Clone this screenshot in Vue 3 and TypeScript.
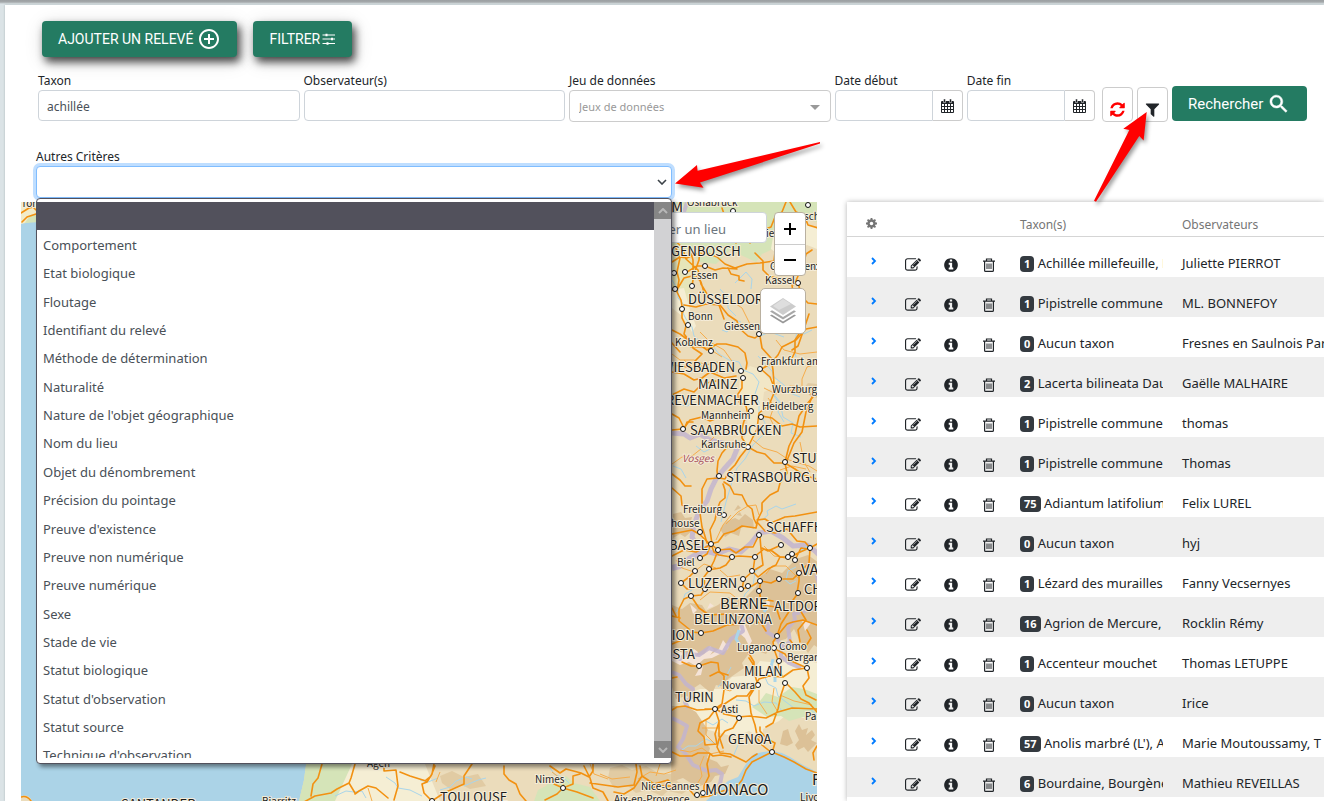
<script setup lang="ts">
import { ref } from 'vue'

interface Row {
  count: number
  taxon: string
  observer: string
}
type Label = [string, number, number, string]

const taxon = ref('achillée')
const observer = ref('')
const dateMin = ref('')
const dateMax = ref('')
const place = ref('')

const criteria: string[] = [
  '',
  'Comportement',
  'Etat biologique',
  'Floutage',
  'Identifiant du relevé',
  'Méthode de détermination',
  'Naturalité',
  "Nature de l'objet géographique",
  'Nom du lieu',
  'Objet du dénombrement',
  'Précision du pointage',
  "Preuve d'existence",
  'Preuve non numérique',
  'Preuve numérique',
  'Sexe',
  'Stade de vie',
  'Statut biologique',
  "Statut d'observation",
  'Statut source',
  "Technique d'observation",
]

const rows: Row[] = [
  { count: 1, taxon: 'Achillée millefeuille, Herbe', observer: 'Juliette PIERROT' },
  { count: 1, taxon: 'Pipistrelle commune', observer: 'ML. BONNEFOY' },
  { count: 0, taxon: 'Aucun taxon', observer: 'Fresnes en Saulnois Parc' },
  { count: 2, taxon: 'Lacerta bilineata Daudin', observer: 'Gaëlle MALHAIRE' },
  { count: 1, taxon: 'Pipistrelle commune', observer: 'thomas' },
  { count: 1, taxon: 'Pipistrelle commune', observer: 'Thomas' },
  { count: 75, taxon: 'Adiantum latifolium', observer: 'Felix LUREL' },
  { count: 0, taxon: 'Aucun taxon', observer: 'hyj' },
  { count: 1, taxon: 'Lézard des murailles', observer: 'Fanny Vecsernyes' },
  { count: 16, taxon: 'Agrion de Mercure,', observer: 'Rocklin Rémy' },
  { count: 1, taxon: 'Accenteur mouchet', observer: 'Thomas LETUPPE' },
  { count: 0, taxon: 'Aucun taxon', observer: 'Irice' },
  { count: 57, taxon: "Anolis marbré (L'), Anolis", observer: 'Marie Moutoussamy, T' },
  { count: 6, taxon: 'Bourdaine, Bourgène', observer: 'Mathieu REVEILLAS' },
]

const cities: [number, number][] = [
  [808, 205], [733, 211], [705, 266], [685, 272], [674, 273], [675, 289], [692, 286], [682, 309],
  [688, 325], [759, 334], [798, 283], [711, 351], [741, 371], [743, 378], [760, 369], [816, 267],
  [751, 411], [761, 417], [683, 429], [748, 447], [785, 462], [719, 476], [724, 515], [700, 532],
  [711, 544], [718, 550], [700, 558], [732, 557], [755, 557], [759, 535], [781, 545], [810, 548],
  [792, 554], [788, 557], [795, 560], [799, 573], [695, 571], [709, 569], [752, 571], [779, 579],
  [743, 579], [760, 581], [748, 586], [681, 583], [741, 589], [705, 589], [691, 596], [798, 593],
  [759, 591], [701, 633], [777, 636], [774, 648], [779, 661], [807, 668], [699, 666], [758, 685],
  [785, 683], [715, 709], [739, 718], [772, 752], [697, 795], [703, 793], [563, 788], [432, 801],
]

const labels: Label[] = [
  ['Torquay', 21, 207, 's'],
  ['M', 671, 212, 'b'],
  ['Osnabruck', 687, 206, 's'],
  ['sch', 804, 220, 's'],
  ['iel', 766, 237, 's'],
  ['GENBOSCH', 671, 256, 'm'],
  ['Göttingen', 770, 270, 's'],
  ['Essen', 691, 279, 's'],
  ['Kassel', 765, 284, 's'],
  ['DÜSSELDORF', 688, 304, 'm'],
  ['Bonn', 688, 320, 's'],
  ['Giessen', 724, 330, 's'],
  ['Koblenz', 675, 346, 's'],
  ['WIESBADEN', 662, 372, 'm'],
  ['Frankfurt am', 761, 365, 's'],
  ['MAINZ', 698, 389, 'm'],
  ['Wurzburg', 772, 393, 's'],
  ['GREVENMACHER', 657, 405, 'm'],
  ['Heidelberg', 762, 410, 's'],
  ['Mannheim', 701, 419, 's'],
  ['SAARBRUCKEN', 690, 435, 'm'],
  ['Karlsruhe', 701, 448, 's'],
  ['Vosges', 682, 462, 'v'],
  ['STUTTGART', 792, 463, 'm'],
  ['STRASBOURG', 726, 482, 'm'],
  ['Ulm', 812, 482, 's'],
  ['Freiburg', 683, 513, 's'],
  ['Mulhouse', 654, 527, 's'],
  ['SCHAFFHAUSEN', 766, 532, 'm'],
  ['BASEL', 669, 550, 'm'],
  ['Biel', 677, 566, 's'],
  ['VADUZ', 801, 575, 'b'],
  ['LUZERN', 688, 588, 'm'],
  ['CHUR', 804, 594, 'm'],
  ['BERNE', 720, 609, 'b'],
  ['ALTDORF', 774, 611, 'm'],
  ['BELLINZONA', 694, 624, 'm'],
  ['SION', 664, 640, 'm'],
  ['Lugano', 737, 651, 's'],
  ['Como', 779, 650, 's'],
  ['AOSTA', 655, 659, 'm'],
  ['Bergamo', 787, 661, 's'],
  ['MILAN', 744, 676, 'm'],
  ['Novara', 722, 689, 's'],
  ['TURIN', 675, 702, 'm'],
  ['Asti', 721, 713, 's'],
  ['Parma', 805, 720, 's'],
  ['GENOA', 728, 744, 'm'],
  ['Firenze', 812, 785, 'b'],
  ['Nice-Cannes', 641, 790, 's'],
  ['MONACO', 705, 795, 'b'],
  ['Livorno', 800, 801, 's'],
  ['Nimes', 535, 783, 's'],
  ['Aix-en-Provence', 614, 803, 's'],
  ['TOULOUSE', 440, 802, 'm'],
  ['Agen', 367, 767, 's'],
  ['Biarritz', 262, 805, 's'],
  ['SANTANDER', 121, 809, 'm'],
]

const shapes: Record<string, string> = {
  edit: 'M888 1184l116-116-152-152-116 116v56h96v96h56zm440-720q-16-16-33 1l-350 350q-17 17-1 33t33-1l350-350q17-17 1-33zm80 594v190q0 119-84.5 203.5t-203.5 84.5h-832q-119 0-203.5-84.5t-84.5-203.5v-832q0-119 84.5-203.5t203.5-84.5h832q63 0 117 25 15 7 18 23 3 17-9 29l-49 49q-14 14-32 8-23-6-45-6h-832q-66 0-113 47t-47 113v832q0 66 47 113t113 47h832q66 0 113-47t47-113v-126q0-13 9-22l64-64q15-15 35-7t20 29zm-96-738l288 288-672 672h-288v-288zm444 132l-92 92-288-288 92-92q28-28 68-28t68 28l152 152q28 28 28 68t-28 68z',
  info: 'M1152 1376v-160q0-14-9-23t-23-9h-96v-512q0-14-9-23t-23-9h-320q-14 0-23 9t-9 23v160q0 14 9 23t23 9h96v320h-96q-14 0-23 9t-9 23v160q0 14 9 23t23 9h448q14 0 23-9t9-23zm-128-896v-160q0-14-9-23t-23-9h-192q-14 0-23 9t-9 23v160q0 14 9 23t23 9h192q14 0 23-9t9-23zm640 416q0 209-103 385.5t-279.5 279.5-385.5 103-385.5-103-279.5-279.5-103-385.5 103-385.5 279.5-279.5 385.5-103 385.5 103 279.5 279.5 103 385.5z',
  refresh: 'M1639 1056q0 5-1 7-64 268-268 434.5t-478 166.5q-146 0-282.5-55t-243.5-157l-129 129q-19 19-45 19t-45-19-19-45v-448q0-26 19-45t45-19h448q26 0 45 19t19 45-19 45l-137 137q71 66 161 102t187 36q134 0 250-65t186-179q11-17 53-117 8-23 30-23h192q13 0 22.5 9.5t9.5 22.5zm25-800v448q0 26-19 45t-45 19h-448q-26 0-45-19t-19-45 19-45l138-138q-148-137-349-137-134 0-250 65t-186 179q-11 17-53 117-8 23-30 23h-199q-13 0-22.5-9.5t-9.5-22.5v-7q65-268 270-434.5t480-166.5q146 0 284 55.5t245 156.5l130-129q19-19 45-19t45 19 19 45z',
  filter: 'M1595 295q17 41-14 70l-493 493v742q0 42-39 59-13 5-25 5-27 0-45-19l-256-256q-19-19-19-45v-486l-493-493q-31-29-14-70 17-39 59-39h1280q42 0 59 39z',
}
</script>

<template>
  <div class="page">
    <main class="sheet">
      <div class="toolbar">
        <button type="button" class="btn raised">
          AJOUTER UN RELEVÉ
          <svg class="plus" viewBox="0 0 24 24" aria-hidden="true"><path fill="currentColor" d="M13 7h-2v4H7v2h4v4h2v-4h4v-2h-4V7zm-1-5C6.480 2 2 6.480 2 12s4.480 10 10 10 10-4.480 10-10S17.520 2 12 2zm0 18c-4.410 0-8-3.590-8-8s3.590-8 8-8 8 3.590 8 8-3.590 8-8 8z" /></svg>
        </button>
        <button type="button" class="btn raised">
          FILTRER
          <svg class="tune" viewBox="0 0 14 12" aria-hidden="true" stroke="currentColor" stroke-width="1.200"><path d="M0.500 2H13M0.500 6H13M0.500 10.500H13" /><path stroke-width="2.600" d="M3.500 2h2M9 6h2M4.500 10.500h2" /></svg>
        </button>
      </div>

      <form class="filters" @submit.prevent>
        <div class="field wide">
          <label for="taxon">Taxon</label>
          <input id="taxon" v-model="taxon" type="text" class="box" />
        </div>
        <div class="field wide">
          <label for="observer">Observateur(s)</label>
          <input id="observer" v-model="observer" type="text" class="box" />
        </div>
        <div class="field wide">
          <label for="dataset">Jeu de données</label>
          <div class="select-wrap">
            <select id="dataset" class="box dataset"><option>Jeux de données</option></select>
            <svg class="caret" viewBox="0 0 10 5" aria-hidden="true"><path d="M0 0h10L5 5z" fill="#999" /></svg>
          </div>
        </div>
        <div class="field narrow">
          <label for="dmin">Date début</label>
          <div class="date">
            <input id="dmin" v-model="dateMin" type="text" class="box" />
            <button type="button" aria-label="Choisir la date de début">
              <svg viewBox="0 0 13 14" aria-hidden="true"><path fill="#212529" d="M1 2h11a1 1 0 0 1 1 1v10a1 1 0 0 1-1 1H1a1 1 0 0 1-1-1V3a1 1 0 0 1 1-1z" /><path fill="#212529" stroke="#fff" stroke-width=".5" d="M2.500 0h2v3.500h-2zM8.500 0h2v3.500h-2z" /><path fill="#fff" d="M1 5h2v2H1zM4 5h2v2H4zM7 5h2v2H7zM10 5h2v2h-2zM1 8h2v2H1zM4 8h2v2H4zM7 8h2v2H7zM10 8h2v2h-2zM1 11h2v2H1zM4 11h2v2H4zM7 11h2v2H7zM10 11h2v2h-2z" /></svg>
            </button>
          </div>
        </div>
        <div class="field narrow">
          <label for="dmax">Date fin</label>
          <div class="date">
            <input id="dmax" v-model="dateMax" type="text" class="box" />
            <button type="button" aria-label="Choisir la date de fin">
              <svg viewBox="0 0 13 14" aria-hidden="true"><path fill="#212529" d="M1 2h11a1 1 0 0 1 1 1v10a1 1 0 0 1-1 1H1a1 1 0 0 1-1-1V3a1 1 0 0 1 1-1z" /><path fill="#212529" stroke="#fff" stroke-width=".5" d="M2.500 0h2v3.500h-2zM8.500 0h2v3.500h-2z" /><path fill="#fff" d="M1 5h2v2H1zM4 5h2v2H4zM7 5h2v2H7zM10 5h2v2h-2zM1 8h2v2H1zM4 8h2v2H4zM7 8h2v2H7zM10 8h2v2h-2zM1 11h2v2H1zM4 11h2v2H4zM7 11h2v2H7zM10 11h2v2h-2z" /></svg>
            </button>
          </div>
        </div>
        <div class="actions">
          <button type="button" class="square red" aria-label="Réinitialiser"><svg viewBox="0 0 1792 1792" aria-hidden="true"><path :d="shapes.refresh" fill="currentColor" /></svg></button>
          <button type="button" class="square" aria-label="Autres filtres"><svg viewBox="0 0 1792 1792" aria-hidden="true"><path :d="shapes.filter" fill="currentColor" /></svg></button>
          <button type="submit" class="btn search">
            Rechercher
            <svg viewBox="0 0 24 24" aria-hidden="true"><path fill="currentColor" stroke="currentColor" stroke-width=".5" d="M15.500 14h-.79l-.28-.27C15.410 12.590 16 11.110 16 9.500 16 5.910 13.090 3 9.500 3S3 5.910 3 9.500 5.910 16 9.500 16c1.610 0 3.090-.59 4.230-1.570l.27.28v.79l5 4.990L20.490 19l-4.990-5zm-6 0C7.010 14 5 11.990 5 9.500S7.010 5 9.500 5 14 7.010 14 9.500 11.990 14 9.500 14z" /></svg>
          </button>
        </div>
      </form>

      <div class="criteria">
        <label for="criteria">Autres Critères</label>
        <div class="combo">
          <select id="criteria" class="box focus"><option></option></select>
          <svg class="chevron" viewBox="0 0 10 6" aria-hidden="true"><path d="M1 1l4 4 4-4" fill="none" stroke="#3c4248" stroke-width="1.600" /></svg>
          <div class="popup">
            <div class="clip">
              <ul role="listbox" aria-label="Autres Critères">
                <li v-for="(c, i) in criteria" :key="c" role="option" :aria-selected="i === 0" :class="{ active: i === 0 }">{{ c }}</li>
              </ul>
            </div>
            <div class="scroll" aria-hidden="true">
              <span class="end"><svg viewBox="0 0 10 6"><path d="M1 5l4-4 4 4" /></svg></span>
              <span class="thumb"></span>
              <span class="end"><svg viewBox="0 0 10 6"><path d="M1 1l4 4 4-4" /></svg></span>
            </div>
          </div>
        </div>
      </div>

      <div class="content">
        <section class="map" aria-label="Carte">
          <svg class="tiles" viewBox="21 202 796 599" preserveAspectRatio="xMaxYMin slice">
            <rect x="21" y="202" width="796" height="599" fill="#abd3e7" />
            <path d="M21 202H40V221L30 222L21 224z" fill="#f2ecc9" />
            <path d="M25 223q4-9 15-9v8z" fill="#d5e4b8" />
            <path d="M308 750L304 780L299 801H706L718 790L728 781L738 777L746 764L754 754L763 752L772 751L782 753L790 757L803 765L817 772V202H308z" fill="#ebdcbb" />
            <path d="M308 750L304 780L299 801H340L352 764z" fill="#d5e4b8" />
            <path d="M352 764L335 801H440L425 764z" fill="#f5eed4" />
            <path d="M552 778l-6 8-8 4-4 11h66l-10-14-16-4-8-7-8 4z" fill="#d5e4b8" />
            <path d="M21 801v-5q8-2 11 5z" fill="#ebdcbb" />
            <path d="M660 202H817V222L790 216L775 232L782 245L762 254L756 262L730 250L716 264L700 262L690 252L660 256z" fill="#d5e4b8" />
            <path d="M775 225l20-8 22 12v20l-10-4-12 6-14 6-10-8z" fill="#f5eed4" />
            <path d="M665 256l22-1 12 15-4 10-6 8 4 10-8 12-22-8z" fill="#e6e5b9" />
            <path d="M672 290l12-2 6 22 6 16-4 6-10-16-10-8z" fill="#f5eed4" />
            <path d="M740 374l10-8 12 4 6 8 10 2-6 8-8 4-2 16-6 22-8 18-8 4 8-24-2-18-8-8z" fill="#f2e7c6" />
            <path d="M686 694l14-5 20 0 12-12 18-2 10-14 20 2 20-4 17 4v58l-18-4-8-6-12 10-16 8 0 10-14-8-14 6-30-8-16-22z" fill="#f5eed4" />
            <path d="M752 707l8-6 6-8 12 4 14-10 12 2 13 5v27l-14-4-14 4-8-5-14 1z" fill="#d5e4b8" />
            <g fill="#dcc197">
              <path d="M672 605l10 4 8-6 12 2 4 6 12-6 10-8 14 4 14-14 4-10 10-8 12 4 14-14 12-4 14 10V650l-8-5-6 8-8-12-6-12-8 10-12 3-8 12-14-5-10 14 2 5-16 11-4 8-8-2-4 9-12-10-6 4 2 12-10-4-10 3-4-12z" />
              <path d="M672 706l14 0 10 6 12 18-5 10 7 8-3 10 10 4 4 5 8-2-4 9-10 2-4 6-14 5-14-9-12 4z" />
              <path d="M673 514l8-2 4 6 7-1-2 8 3 5-8 7-5-3-7 4zM720 529l7-8 8-3 4 2 6-6 8 6 1 9-7-3-6 2-2 8-8-3-6 4zM734 511l4-6 3 3zM736 515l4-3 2 4z" />
              <path d="M780 744l3-13 5-2 2 7 3 7-6 3zM795 731l4-7 3 6 6-2-2 7 6-5 3 5-4 5 6 3-5 5-4 4-4-5-6 3-3-5 4-5z" />
              <path d="M610 768l12-3 10 5 14-4 14 8 12 0 6 8 14 5-10 7-14-3-6 5-14-6-12 3-8-7-14 2-6-10zM804 388l4-5 9 1v14l-7-2zM440 776l12-5 12 6 14-3 8 12-16 3-8-4-12 4-8-6z" opacity=".65" />
            </g>
            <g fill="#f4e3d8">
              <path d="M672 653l9-1 5 3 8-6 4 3-2 4 8-2 6-8 4 4-4 5 9-6 4-9 3 4 4-2-2 7-8 5-8 4-8 1-8 7-7-4-9 3-8-4zM740 624l5 1 3 7 4 9-3 5-4-8-6-5zM746 616l5 6-1 6z" />
              <path d="M695 676l4-7 4-3-2 9zM764 597l6 5-1 6zM802 620l9 3-6 8zM690 604l7 6-4 4zM710 603l4 3-7 3z" />
            </g>
            <g fill="none" stroke="#c3b5cf" stroke-width="4" stroke-linejoin="round" opacity=".85">
              <path d="M672 433l12 1 6 4 10-4 10 6 12 3 10 2 5 4-4 10-9 10-8 10-5 10-4 12-8 10-5 14-2 12 5 9 8 5 12 3 12-5 12 3 10-9 8-10 12-2 12 7 10 8 14-1 8 6 8 8-6 16 2 8" stroke-width="5" />
              <path d="M672 568l8-2 9-7 10-6 10-6" stroke-width="6" />
              <path d="M672 655l8 4 7-5 12 1 10-7 14 5 8-14 12-8-2-8 10-8 10 3 8 6-2 8 10 6 4 8 0 10 8 7 12 5M780 648l10-6-2-14 7-8-1-6 14-4 9-2" />
              <path d="M672 672l7 3 7 9 7 5-1 8-7 5 3 6M672 718l8 4 7 4-4 13-5 8 7 6 8 12 14 6 9-1 6 4-2 10-6 7" />
              <path d="M687 202l-3 10-8 8" />
            </g>
            <g fill="none" stroke="#a9d5ea" stroke-width="1" stroke-linejoin="round">
              <path d="M672 280l6 10 0 8 6 7-2 6 4 8 6 8 2 9 7 6 12 4 6 8 10 6 10 2 4 8 10 4 6 8-4 12 4 8 0 10 6 11 -2 12-10 10-8 14-8 9-5 14-6 20-5 20" />
              <path d="M722 330l5 2 8-12 6 2M735 283l6-6 5-5 6 7-1 10M760 336l10-4 14 5M736 316l-8-8 0-10-8-9M758 356l14 15 2 6 10 8 6 8 10 4M772 392l8 10 3 15 10 6-2 10 10 4" />
              <path d="M812 330l-8 4-7-3-3 16 2 10M774 386l0 10 6 8-2 8 6 10M674 404l14 2 5-6M673 466l8 3 5 9M762 520l6-5-1-4 9-5 6 3 14-5M786 580l2-9 8-4M742 602l3-8 8-8 2-14 6-5M676 612l6-8 3-10 7-4M783 578l7 6 6-3M696 446l8 6 6-3" />
              <path d="M764 675l4 9 8 4 2 8 16 12 16 1 7 6M736 700l10 1 8 5 10-4 12 1 6 8M682 750l6-4 8 0 10-7 8 4 8 0M704 720l9 5 9-6 6 4M733 757l5-12 1-12M731 667l-6 12-7 8" />
              <path d="M420 780l8 2 10-4M335 796l11-5 8 1 8-1 4 7M440 790l10-3 6-6 10-4 6 2M550 768l5 7 8 2 6 6M464 786l14-6 8-2M386 777l9 6 3 5 12 2 12 6" />
              <path d="M773 659l-2 8 4 7 0 8M740 645l-4-6 3-9M800 550l12-4M764 612l4-6" stroke-width="3" />
            </g>
            <g fill="none" stroke="#f6ad4c" stroke-width="1" stroke-linejoin="round">
              <path d="M672 354l8 6 14 0 12 5 12-3M690 347l18 1 14 9M672 464l10-7 10-1 14-11 8-8M753 440l10 8 14 4 12 8 20 6 8 5M780 470l12-4 14 3M726 524l12-12 10-6 8-1 3 10M716 540l7-15 8-10" />
              <path d="M700 332l10 10 14 8 10 14M684 360l10 9 10-4 14 8M730 300l12 8 10 20M776 340l8 10 16 4 17-2M764 388l12 6 14-8 12 1 0-8 5-12 10-3M776 430l-6-12 4-12-6-8M800 442l4 20 6 10" />
              <path d="M676 560l6 8 12 4 10-8 12 4M720 570l8 7 12-2M764 546l10 10 14 2M766 574l6-8 14 0 12 12M700 600l10-8 20 1 10 8M752 690l-12-6-10 7-9-3M759 690l0 12 8 12M774 688l-2 14 6 10M780 695l14 6 18 4M706 720l0 15 10 10M702 728l18 0M680 750l10 2 12-4 8 6 14-3" />
              <path d="M676 770l-12 4-14-2-12 7M660 764l-4 12M704 756l-4 10 2 10-6 10M600 774l12 5 18-2M440 772l-4 10M368 788l4 13M552 772l8 6 4 8M590 764l4 10 14 5" />
            </g>
            <g fill="none" stroke="#f29111" stroke-width="1.600" stroke-linejoin="round" stroke-linecap="round">
              <path d="M672 262l8-5 7 1 8-4 12-1 10 4 8 7 10 4 12-4 13-1 14-2 1-9M672 238l10 9 4 12 12 11 3 14 6 10M676 248l4 10-3 14 2 8-2 12 4 8 2 12M687 272l10-6 8 0 10 4 8-2 14 1M728 268l3 6 8 2 0 4 5 1M660 298l8-6 10-4 6-10 8-2M700 246l-1 14-5 14-2 12M689 246l4 14 0 12 8 10 4 14 14 9 5 14" />
              <path d="M736 243l-2-8-7-7-7-8 4-6-2-6M750 243l3-8 6 3 4-8 8-3 4-10 7-5 4-10M790 202l6 10 8 3 4 10 10 3M672 220l8 2 6 10 12 0M812 250l-6 4-2 8-6 6 0 8-3 7M755 253l8 8 0 9 6 6 10 3 19 5M798 283l-6 2 1 8-8 6 0 8-8 7M798 283l4 14 6 6 9 1" />
              <path d="M684 305l12 2 10-3 14 1 8 10 9 6 2 7 9 8 7 2 5-4M672 330l8 4 8 6 11 4 8 6 10-6 9 0 12 3 7 6 2 10-1 6M760 370l10-6 8-9 4-8 14-7 10-11 11-2M682 310l0 8 4 8-2 8 5 6 4 8 9 6-7 7-7 6-16-2M672 372l12 2 10 6 8-2 8-6 14 6 12-2M672 395l12-6 10 3 8-8 14-3M742 380l0 8-4 6 1 8 7 4 2 9-4 6-2 8" />
              <path d="M760 336l2 12 9 10 2 12 1 14 0 9-5 12-10 8-2 16-9 18M792 350l6-4 7-20 4-12M790 362l5-10 0-12 4-6M762 370l8 7 4 10 8 4 18-1 17 6M762 416l10 2 10 8 10-2 8 3 17-1M817 392l-10 12-8 12-4 18-6 12-4 16M680 352l-9-10M672 414l7 4 5 10 6-8 12-3 8 4 10-4 10 2 6-3 7 0" />
              <path d="M672 430l10-1M684 430l3-8 6 0M742 430l0 8 6 9-8 10-5 8-6 6-4 8-6-1M748 447l9 5 8 2 9 9 11 0 10 6 8 6 14 4M738 442l-8 2-8 9-4 8-1 10 1 7-11 1-5 10 0 14-2 10 2 14 2 6 3 10 5 1M672 474l8 6 5 6 6 0M723 484l2 6 0 8-5 4-3 8-2 10-5 10 2 14" />
              <path d="M724 482l6 4 4 8 8 1 5 10 5 4 2 10 3 6M785 463l2 10-7 10-2 8-8 4-8 8 0 8-4 8-2 9-14-2-8 5-10 3-6 8-8 2M786 463l8-20 8-11 4-20 4-10 4-10M757 520l8-1 6 4 14-6 10-1 22-4M757 522l8 9 10 2 12-4 10 12 8 1 5 6 7-4M672 488l9 8 1 9 7 3M672 534l10-2 10-2 7 4 11 10M672 556l12-6 12 2 14-7" />
              <path d="M711 544l7 6 12-1 6 4 9-6 8 0 6-12M700 558l7-4 4-10 3 8 5 3 12 2 8-1 15 1 10-8 8 2 8 6 9 1 9-5 9-4M718 550l-4 11-4 8-6 8 1 10M732 557l-6 8-6 3 -12 2M755 557l-2 14-9 8-2 10M760 537l1 12 2 16-10 6M762 548l6 3 13-6M795 560l6-12 9 1-1 14-4 4-6 6 0 8-2 12M752 571l6 6 10-8 8-4 4-8 8 0M779 579l-8 4-10-2-2 10 2 8 12 2" />
              <path d="M799 573l-6 6-10 0M681 583l6 6 10-2 8 2-4 6-10 1-7 3-5 10 0 12 10 8M672 616l8 2M695 571l-6 6 -8 6M691 596l8 12 10 7 18-1M760 581l-8 5-10 3M759 591l3 14 14 2 4 12M798 593l-7 10-1 7-9 14-4 12M672 608l4 8M672 644l10-4 10-8 9 1 12-2 14-6 16-1 10-3 8 2 5 8" />
              <path d="M777 636l-4 6 1 7 4 11 1 8 3 8M807 668l-14 2-10 7-14-1-10 3-5 8-7 9-10 0-8 5-12 8-12 0M699 666l-8 0-9-4M699 666l12-4 7 1 1 8 5 5 0 14-2 14-7 5M672 678l5-1M758 685l-4 4-5 8 2 16 4 12 2 10 5 3M785 683l-4 12-3 14-5 14-7 4M787 684l8 8 6 7 8 4 8 9M716 709l8 5 14 3 12-1 16 2 12-6 14-4 25 1M672 710l5-3 8-1 12 4 18-1" />
              <path d="M748 652l6 10 0 10 3 10M749 658l4 6-2 8M710 676l8-4 10 3M777 650l8 4 4 6 18 8M807 668l2 10-6 8 3 9 10 5M790 640l6 8 10-2 5-8-4-8M800 610l6 10-8 10 2 12M777 636l10-12 6-2 10-2 14 5M715 710l-6 8-9 5-2 8 6 6 1 8 12-1-2-10 4-12M716 712l3 9 0 15 4 12" />
              <path d="M739 718l-6 10-8 3-6 8-2 8 3 6 10 1 16 8 6-5 5-3M760 727l0 4 7 8 8 4-3 10-10-8-4-6M772 752l-10 5-10 5-6 8-4 10-8 10-8 0-10 3-7 3-8 1M772 752l12 5 10 5 12 7 11 4M817 746l-4 7 1 7M672 752l8 4 12 0 6-3 11 0 4 3 8-1 10 2" />
              <path d="M710 754l-3 10 2 12-5 10 0 8M322 764l-4 14-5 6-2 12M355 764l-4 14-2 5-12 6-6 4-16 3-11 6M349 783l6 10M355 794l4-3 9-5 8 2 12 10M384 764l0 7 12-1 2 16-4 14M400 772l10 4 16 5M434 764l-2 10-5 8-5 2 2 9 8 8M426 780l5-4 4-10M432 801l12-8 20-9 0-8 8-12M504 766l0 8 5 6 7 4 4 10 6 7" />
              <path d="M550 766l10 7 6-4 15 4 8 4 4-6 0-8M554 784l9 4 10-4 0-8 7-2M584 766l6 12 3 10 10 4 5 9M563 788l-6 6-12 6M563 788l14 4 16 6M590 783l28 4 16-2 3-13-1-8M640 766l2 10-8 12-10 6-10-2M642 776l12 8 14-4 6 6 14 2 6 7 3 0M650 790l6-4 16 0M21 797q6-2 10 4M21 213l8-5 5-1M22 222l5-5 9-3M30 204l6 6" />
            </g>
            <g fill="#fff" stroke="#111" stroke-width="1">
              <circle v-for="(c, i) in cities" :key="i" :cx="c[0]" :cy="c[1]" r="2.500" />
            </g>
            <text v-for="l in labels" :key="l[0]" :x="l[1]" :y="l[2]" :class="['city', l[3]]">{{ l[0] }}</text>
          </svg>
          <div class="map-tools">
            <input v-model="place" class="place" type="search" placeholder="Rechercher un lieu" aria-label="Rechercher un lieu" />
            <div class="map-side">
              <div class="zoom">
                <button type="button" aria-label="Zoom avant"><svg viewBox="0 0 12 12"><path d="M6 0v12M0 6h12" /></svg></button>
                <button type="button" aria-label="Zoom arrière"><svg viewBox="0 0 12 12"><path d="M0 6h12" /></svg></button>
              </div>
              <button type="button" class="layers" aria-label="Couches">
                <svg viewBox="0 0 26 26"><path fill="#989898" d="M0 17.500l13-8 13 8-13 8z" /><path fill="#fff" d="M0 15.500l13-8 13 8-13 8z" /><path fill="#a8a8a8" d="M0 13.500l13-8 13 8-13 8z" /><path fill="#fff" d="M0 11l13-8 13 8-13 8z" /><path fill="#ccc" d="M0 8.500L13 0l13 8.500L13 17z" /><path fill="#dedede" d="M3 8l10-7 8 5-12 6z" /></svg>
              </button>
            </div>
          </div>
        </section>

        <section class="results">
          <table>
            <colgroup>
              <col class="c-open" /><col class="c-icon" /><col class="c-icon" /><col class="c-icon" /><col class="c-taxon" /><col />
            </colgroup>
            <thead>
              <tr>
                <th class="mid"><button type="button" aria-label="Colonnes"><svg class="gear" viewBox="0 0 12 12"><g fill="#757575"><path d="M5 0h2v12H5zM0 5h12v2H0zM1 2.400L2.400 1 11 9.600 9.600 11zM9.600 1L11 2.400 2.400 11 1 9.600z" /><circle cx="6" cy="6" r="4.600" /></g><circle cx="6" cy="6" r="1.900" fill="#fff" /></svg></button></th>
                <th></th><th></th><th></th>
                <th>Taxon(s)</th>
                <th>Observateurs</th>
              </tr>
            </thead>
            <tbody>
              <tr v-for="(r, i) in rows" :key="i">
                <td class="open"><button type="button" aria-label="Déplier"><svg viewBox="0 0 6 8"><path d="M1 1l3 3-3 3" fill="none" stroke="#007bff" stroke-width="1.800" /></svg></button></td>
                <td class="icon"><button type="button" aria-label="Modifier"><svg class="i16" viewBox="0 0 1792 1792"><path :d="shapes.edit" fill="currentColor" /></svg></button></td>
                <td class="icon"><button type="button" aria-label="Informations"><svg class="i16" viewBox="0 0 1792 1792"><path :d="shapes.info" fill="currentColor" /></svg></button></td>
                <td class="icon"><button type="button" aria-label="Supprimer"><svg class="i14" viewBox="0 0 14 14" fill="none" stroke="currentColor"><path stroke-width="1.200" d="M1 3.200h12M4.500 3V1h5v2M2.600 3.200v9.200q0 1 1 1h6.800q1 0 1-1V3.200" /><path d="M5 5.500v5.500M7 5.500v5.500M9 5.500v5.500" /></svg></button></td>
                <td class="taxon"><span class="badge">{{ r.count }}</span> {{ r.taxon }}</td>
                <td class="obs">{{ r.observer }}</td>
              </tr>
            </tbody>
          </table>
        </section>
      </div>
    </main>

    <svg class="pointers" width="1324" height="260" viewBox="0 0 1324 260" aria-hidden="true">
      <path d="M675 183.500L697 165l.6 5.800L820 142v1.600L700 182.500l3.500 5.200z" />
      <path d="M1146.700 112L1123.300 128.700l6 1.300L1094 200.700l2 1L1139.300 136l4.300 4.600z" />
    </svg>
  </div>
</template>

<style>
html,
body {
  height: 100%;
  margin: 0;
  overflow: hidden;
}
#app {
  height: 100%;
}
</style>

<style scoped>
* {
  box-sizing: border-box;
}
.page {
  position: relative;
  display: flex;
  height: 100%;
  padding: 5px 0 0 5px;
  overflow: hidden;
  background: linear-gradient(#9b9fa2 0, #a4a8aa 2px, #dbe3e6 4px);
  color: #212529;
  font: 13px/20px "Noto Sans", "Open Sans", sans-serif;
}
.sheet {
  display: flex;
  flex: 1;
  flex-direction: column;
  min-width: 0;
  background: #fff;
  box-shadow: 0 0 2px #aab4b8;
}
button {
  padding: 0;
  border: 0;
  background: none;
  color: inherit;
  font: inherit;
}
svg {
  display: block;
}
.toolbar {
  display: flex;
  gap: 16px;
  padding: 16px 37px 0;
}
.btn {
  display: flex;
  align-items: center;
  height: 36px;
  padding: 0 16px;
  border-radius: 4px;
  background: #247b62;
  color: #fff;
  font: 14px/20px Roboto, sans-serif;
}
.raised {
  box-shadow: 3px 5px 8px rgba(0, 0, 0, 0.7), 2px 4px 20px rgba(0, 0, 0, 0.15);
}
.plus {
  width: 24px;
  height: 24px;
  margin-left: 4px;
}
.tune {
  width: 14px;
  height: 12px;
  margin-left: 2px;
}
.filters {
  display: flex;
  align-items: flex-start;
  gap: 4px;
  padding: 14px 17px 0 33px;
}
.field {
  display: flex;
  flex-direction: column;
  min-width: 0;
}
.wide {
  flex: 261 1 0;
}
.narrow {
  flex: 128 1 0;
}
label {
  color: #212529;
  font-size: 12px;
  line-height: 19px;
}
.field label {
  height: 19px;
  line-height: 20px;
}
.box {
  width: 100%;
  min-width: 0;
  height: 31px;
  padding: 1px 8px 0;
  border: 1px solid #ced4da;
  border-radius: 4px;
  outline: 0;
  background: #fff;
  color: #495057;
  font: 12px/20px "Noto Sans", sans-serif;
  appearance: none;
}
.select-wrap {
  position: relative;
}
.dataset {
  height: 32px;
  padding-left: 9px;
  border-color: #ccc;
  color: #999;
  font-size: 11px;
}
.caret {
  position: absolute;
  top: 15px;
  right: 11px;
  width: 10px;
  height: 5px;
}
.date {
  display: flex;
}
.date .box {
  flex: 1;
  border-radius: 4px 0 0 4px;
}
.date button {
  display: flex;
  align-items: center;
  justify-content: center;
  width: 30px;
  height: 31px;
  border: 1px solid #ccc;
  border-left: 0;
  border-radius: 0 4px 4px 0;
}
.date svg {
  width: 13px;
  height: 14px;
}
.actions {
  display: flex;
  align-items: flex-start;
  gap: 4px;
  margin: 15px 0 0 3px;
}
.square {
  display: flex;
  align-items: flex-end;
  justify-content: center;
  width: 31px;
  height: 35px;
  margin-top: 1px;
  padding-bottom: 3px;
  border: 1px solid #ccc;
  border-radius: 4px;
}
.square svg {
  width: 17px;
  height: 17px;
}
.red {
  color: #f00;
}
.search {
  width: 135px;
  height: 35px;
  font-size: 15px;
}
.search svg {
  width: 24px;
  height: 24px;
  margin-left: 4px;
}
.criteria {
  display: flex;
  flex-direction: column;
  width: 50%;
  padding: 25px 0 0 31px;
}
.combo {
  position: relative;
  width: 636px;
}
.focus {
  display: block;
  height: 32px;
  border-color: #80bdff;
  box-shadow: 0 0 0 3px #bfdeff;
}
.chevron {
  position: absolute;
  top: 13px;
  right: 5px;
  width: 10px;
  height: 6px;
}
.popup {
  position: absolute;
  z-index: 3;
  top: 32px;
  right: 0;
  left: 0;
  display: flex;
  height: 566px;
  padding: 3px 0 5px;
  border: 1px solid #52515c;
  border-radius: 4px;
  background: #fff;
  box-shadow: 3px 3px 4px rgba(0, 0, 0, 0.45);
  overflow: hidden;
}
.clip {
  flex: 1;
  overflow: hidden;
}
.popup ul {
  display: grid;
  grid-auto-rows: 1fr;
  height: 567px;
  margin: 0;
  padding: 0;
  list-style: none;
}
.popup li {
  display: flex;
  align-items: center;
  padding: 1px 6px 0;
  color: #495057;
}
.popup .active {
  background: #52515c;
}
.scroll {
  display: flex;
  flex-direction: column;
  width: 17px;
  background: #d2d2d4;
}
.end {
  display: grid;
  place-items: center;
  height: 17px;
  background: #868686;
}
.end svg {
  width: 10px;
  height: 6px;
  fill: none;
  stroke: #b8b8b8;
  stroke-width: 2;
}
.thumb {
  height: 61px;
  margin-top: auto;
  background: #b8b8b9;
}
.content {
  display: flex;
  flex: 1;
  gap: 30px;
  min-height: 0;
  margin-top: 4px;
  padding-left: 16px;
}
.map {
  position: relative;
  flex: 796 1 0;
  min-width: 0;
  overflow: hidden;
  background: #abd3e7;
}
.tiles {
  width: 100%;
  height: 100%;
}
.city {
  fill: #1c1c1c;
  stroke: #f5ecd8;
  stroke-width: 2px;
  paint-order: stroke;
  font-family: "Noto Sans CJK SC", "Noto Sans", sans-serif;
}
.s {
  font-size: 10px;
}
.m {
  font-size: 13px;
}
.b {
  font-size: 15px;
}
.v {
  fill: #a8505a;
  font-size: 10px;
  font-style: italic;
}
.map-tools {
  position: absolute;
  top: 10px;
  right: 11px;
  display: flex;
  align-items: flex-start;
}
.place {
  width: 168px;
  height: 31px;
  margin-right: -7px;
  padding: 2px 12px 0;
  border: 1px solid #ced4da;
  border-radius: 4px;
  font: 13px/20px "Noto Sans", sans-serif;
}
.place::placeholder {
  color: #6c757d;
}
.map-side {
  display: flex;
  flex-direction: column;
  align-items: flex-end;
  gap: 12px;
}
.zoom {
  width: 32px;
  border: 1px solid #b9b0a0;
  border-radius: 4px;
  background: #fff;
}
.zoom button {
  display: grid;
  place-items: center;
  width: 30px;
  height: 31px;
}
.zoom button + button {
  border-top: 1px solid #ccc;
}
.zoom svg {
  width: 12px;
  height: 12px;
  stroke: #000;
  stroke-width: 2;
}
.layers {
  display: grid;
  place-items: center;
  width: 46px;
  height: 46px;
  border: 1px solid #b9b0a0;
  border-radius: 5px;
  background: #fff;
}
.layers svg {
  width: 26px;
  height: 26px;
}
.results {
  flex: 477 1 0;
  min-width: 0;
  overflow: hidden;
  box-shadow: 0 0 5px rgba(0, 0, 0, 0.3);
}
table {
  width: 100%;
  border-collapse: collapse;
  table-layout: fixed;
}
.c-open {
  width: 47px;
}
.c-icon {
  width: 38px;
}
.c-taxon {
  width: 162px;
}
th {
  height: 34px;
  padding: 13px 0 0 12px;
  border-bottom: 1px solid #d5d5d5;
  color: #757575;
  font-size: 12px;
  font-weight: 400;
  line-height: 20px;
  text-align: left;
}
th.mid {
  padding: 13px 0 0 19px;
}
.gear {
  width: 11px;
  height: 11px;
}
tbody tr {
  height: 40px;
}
tbody tr:nth-child(even) {
  background: #eee;
}
td {
  height: 40px;
  padding: 0;
  overflow: hidden;
  white-space: nowrap;
}
.open {
  padding: 0 0 0 24px;
  vertical-align: top;
}
.open button {
  padding-top: 20px;
}
.open svg {
  width: 6px;
  height: 8px;
}
.icon {
  padding: 16px 0 0;
}
.icon button {
  display: grid;
  place-items: center;
  width: 38px;
  height: 24px;
}
.i16 {
  width: 16px;
  height: 16px;
}
.i14 {
  width: 14px;
  height: 14px;
}
.taxon,
.obs {
  padding: 13px 0 0 12px;
}
.taxon {
  overflow: clip;
  overflow-clip-margin: content-box;
  padding-right: 7px;
}
.badge {
  display: inline-block;
  padding: 0 4px;
  border-radius: 4px;
  background: #343a40;
  color: #fff;
  font-size: 11px;
  font-weight: 700;
  line-height: 16px;
}
.pointers {
  position: absolute;
  z-index: 5;
  top: 0;
  left: 0;
  fill: #f00;
  filter: drop-shadow(2px 3px 2px rgba(0, 0, 0, 0.4));
  pointer-events: none;
}
</style>
